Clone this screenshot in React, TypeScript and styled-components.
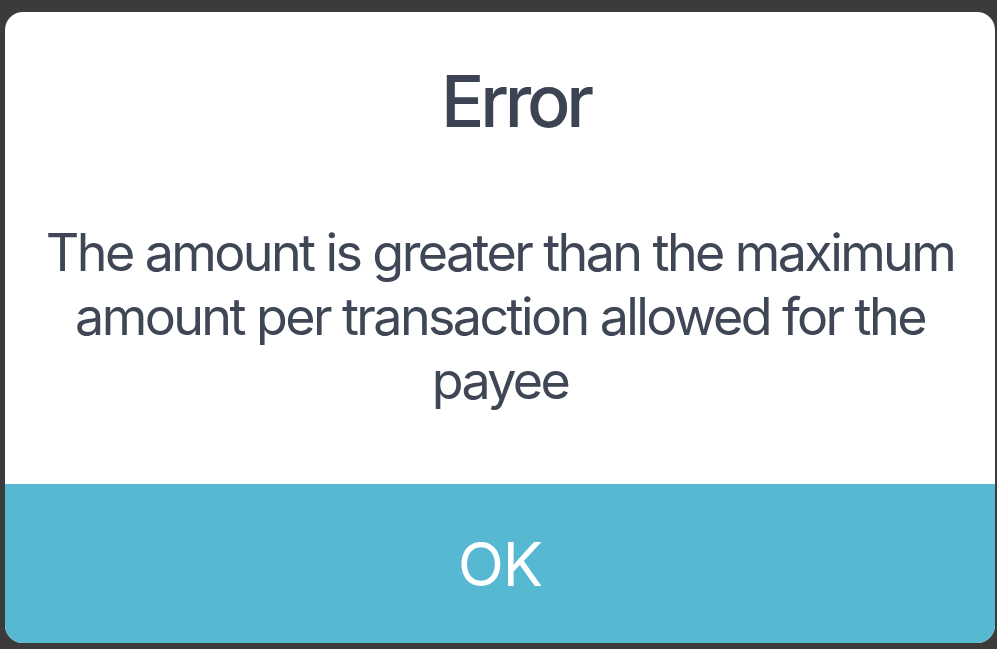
import React from "react";
import styled, { createGlobalStyle } from "styled-components";

const Global = createGlobalStyle`
  html, body {
    margin: 0;
    padding: 0;
    background: #3b3b3b;
  }
  body {
    font-family: Inter, "Noto Sans", "Liberation Sans", sans-serif;
  }
`;

const Backdrop = styled.div`
  width: 997px;
  height: 649px;
  box-sizing: border-box;
  padding: 12px 2px 6px 5px;
  background: #3b3b3b;
  display: flex;
`;

const Dialog = styled.div`
  flex: 1;
  display: flex;
  flex-direction: column;
  background: #ffffff;
  border-radius: 18px;
  overflow: hidden;
`;

const Content = styled.div`
  flex: 1;
  display: flex;
  flex-direction: column;
  align-items: center;
  padding: 49px 12px 0;
`;

const Title = styled.h1`
  margin: 0;
  padding-left: 31px;
  font-size: 72px;
  line-height: 80px;
  font-weight: 500;
  letter-spacing: -0.058em;
  color: #3c4352;
  text-align: center;
`;

const Message = styled.p`
  margin: 80px 0 0;
  font-size: 52px;
  line-height: 64px;
  font-weight: 400;
  letter-spacing: -0.05em;
  color: #3f4656;
  text-align: center;
`;

const OkButton = styled.button`
  height: 159px;
  flex: none;
  border: none;
  margin: 0;
  padding: 0;
  background: #56b8d1;
  color: #ffffff;
  font-family: inherit;
  font-size: 60px;
  font-weight: 400;
  letter-spacing: -0.02em;
  display: flex;
  align-items: center;
  justify-content: center;
  cursor: pointer;
`;

export default function App() {
  return (
    <>
      <Global />
      <Backdrop>
        <Dialog>
          <Content>
            <Title>Error</Title>
            <Message>
              The amount is greater than the maximum amount per transaction
              allowed for the payee
            </Message>
          </Content>
          <OkButton>OK</OkButton>
        </Dialog>
      </Backdrop>
    </>
  );
}
